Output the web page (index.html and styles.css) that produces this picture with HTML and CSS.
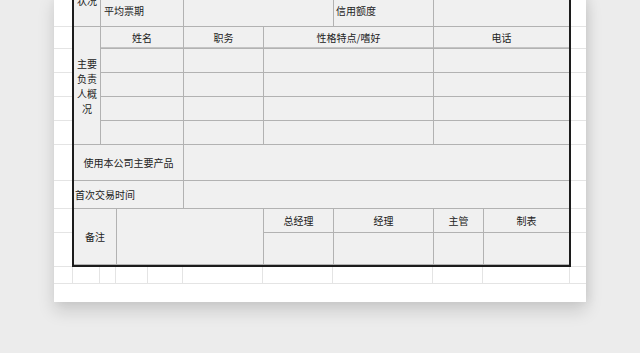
FILE: index.html
```html
<!DOCTYPE html>
<html lang="zh-CN">
<head>
<meta charset="utf-8">
<title>客户资料表</title>
<link rel="stylesheet" href="styles.css">
</head>
<body>
<div class="paper">
  <div class="sheet">
    <div class="margin-col">
      <div class="mc h33"></div><div class="mc h22"></div><div class="mc h24"></div><div class="mc h24"></div><div class="mc h24"></div><div class="mc h24"></div><div class="mc h36"></div><div class="mc h28"></div><div class="mc h24"></div><div class="mc h34"></div>
    </div>
    <div class="table">
      <div class="c c1 top"><span class="cut">状况</span></div>
      <div class="c left pad3 s2-4">平均票期</div>
      <div class="c s5-6"></div>
      <div class="c left pad2 c7">信用额度</div>
      <div class="c s8-9"></div>

      <div class="c c1 vert r2-6">主要负责人概况</div>
      <div class="c s2-4 hd">姓名</div>
      <div class="c c5 hd">职务</div>
      <div class="c s6-7 hd">性格特点/嗜好</div>
      <div class="c s8-9 hd">电话</div>

      <div class="c s2-4"></div><div class="c c5"></div><div class="c s6-7"></div><div class="c s8-9"></div>
      <div class="c s2-4"></div><div class="c c5"></div><div class="c s6-7"></div><div class="c s8-9"></div>
      <div class="c s2-4"></div><div class="c c5"></div><div class="c s6-7"></div><div class="c s8-9"></div>
      <div class="c s2-4"></div><div class="c c5"></div><div class="c s6-7"></div><div class="c s8-9"></div>

      <div class="c s1-4">使用本公司主要产品</div>
      <div class="c s5-9"></div>

      <div class="c s1-4 left pad1">首次交易时间</div>
      <div class="c s5-9"></div>

      <div class="c s1-2 r9-10">备注</div>
      <div class="c s3-5 r9-10"></div>
      <div class="c c6">总经理</div>
      <div class="c c7">经理</div>
      <div class="c c8">主管</div>
      <div class="c c9">制表</div>
      <div class="c c6"></div><div class="c c7"></div><div class="c c8"></div><div class="c c9"></div>
    </div>
    <div class="margin-col right">
      <div class="mc h33"></div><div class="mc h22"></div><div class="mc h24"></div><div class="mc h24"></div><div class="mc h24"></div><div class="mc h24"></div><div class="mc h36"></div><div class="mc h28"></div><div class="mc h24"></div><div class="mc h34"></div>
    </div>
  </div>
  <div class="foot-row">
    <div class="fc w19"></div><div class="fc w27"></div><div class="fc w16"></div><div class="fc w32"></div><div class="fc w35"></div><div class="fc w80"></div><div class="fc w70"></div><div class="fc w100"></div><div class="fc w50"></div><div class="fc w87"></div><div class="fc w16 last"></div>
  </div>
  <div class="blank"></div>
</div>
</body>
</html>
```

FILE: styles.css
```css
html, body {
  margin: 0;
  padding: 0;
  background: #ececec;
  overflow: hidden;
  height: 353px;
}
body {
  font-family: "Noto Sans CJK SC", "Noto Sans", sans-serif;
  font-size: 10px;
  color: #222;
}
.paper {
  margin-top: -6px;
  margin-left: 54px;
  width: 532px;
  background: #fff;
  box-shadow: 0 9px 16px rgba(0, 0, 0, 0.14), 3px 0 10px rgba(0, 0, 0, 0.06);
  display: flex;
  flex-direction: column;
}
.sheet {
  display: flex;
}
.margin-col {
  width: 18px;
  display: flex;
  flex-direction: column;
}
.margin-col.right {
  width: 15px;
}
.mc {
  box-sizing: border-box;
  border-bottom: 1px solid #e4e4e4;
}
.h33 { height: 33px; }
.h22 { height: 22px; }
.h24 { height: 24px; }
.h36 { height: 36px; }
.h28 { height: 28px; }
.h34 { height: 34px; }

.table {
  width: 495px;
  border: 2px solid #1c1c1c;
  background: #b2b2b2;
  display: grid;
  grid-template-columns: 26px 15px 31px 34px 79px 69px 99px 49px 85px;
  grid-template-rows: 30px 21px 23px 23px 23px 23px 35px 27px 23px 31px;
  gap: 1px;
}
.c {
  background: #f0f0f0;
  display: flex;
  align-items: center;
  justify-content: center;
  white-space: nowrap;
  line-height: 14px;
}
.c.top {
  align-items: flex-start;
}
.cut {
  display: block;
  line-height: 15px;
  margin-top: -3px;
}
.left { justify-content: flex-start; }
.pad1 { padding-left: 1px; }
.pad2 { padding-left: 2px; }
.pad3 { padding-left: 3px; }
.vert {
  white-space: normal;
  text-align: center;
  line-height: 15px;
  padding: 0 3px;
  word-break: break-all;
}
.hd { box-shadow: inset 0 -1px 0 #c4c4c4; }

.c1 { grid-column: 1; }
.c5 { grid-column: 5; }
.c6 { grid-column: 6; }
.c7 { grid-column: 7; }
.c8 { grid-column: 8; }
.c9 { grid-column: 9; }
.s1-2 { grid-column: 1 / 3; }
.s1-4 { grid-column: 1 / 5; }
.s2-4 { grid-column: 2 / 5; }
.s3-5 { grid-column: 3 / 6; }
.s5-6 { grid-column: 5 / 7; }
.s5-9 { grid-column: 5 / 10; }
.s6-7 { grid-column: 6 / 8; }
.s8-9 { grid-column: 8 / 10; }
.r2-6 { grid-row: 2 / 7; }
.r9-10 { grid-row: 9 / 11; }

.foot-row {
  display: flex;
  height: 16px;
  border-bottom: 1px solid #e4e4e4;
}
.fc {
  box-sizing: border-box;
  border-right: 1px solid #e4e4e4;
  height: 16px;
}
.fc.last { border-right: none; }
.w19 { width: 19px; }
.w27 { width: 27px; }
.w16 { width: 16px; }
.w32 { width: 32px; }
.w35 { width: 35px; }
.w80 { width: 80px; }
.w70 { width: 70px; }
.w100 { width: 100px; }
.w50 { width: 50px; }
.w87 { width: 87px; }
.blank { height: 18px; }
```
